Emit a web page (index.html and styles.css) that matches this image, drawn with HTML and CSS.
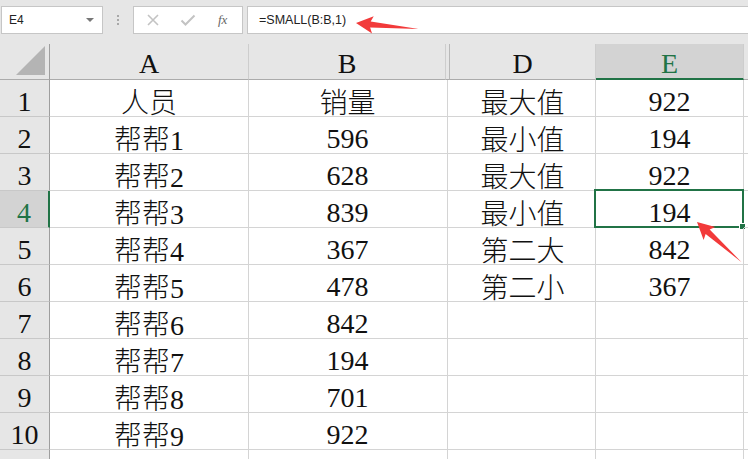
FILE: index.html
```html
<!DOCTYPE html>
<html>
<head>
<meta charset="utf-8">
<link rel="stylesheet" href="styles.css">
</head>
<body>
<div class="app">
  <div class="toolbar">
    <div class="namebox"><span>E4</span><span class="caret"></span></div>
    <div class="dots"><i></i><i></i><i></i></div>
    <div class="fxbtns">
      <svg class="ico" width="14" height="14" viewBox="0 0 14 14"><path d="M2 2L12 12M12 2L2 12" stroke="#c3c3c3" stroke-width="1.6" fill="none"/></svg>
      <svg class="ico" width="16" height="14" viewBox="0 0 16 14"><path d="M1.5 7.5L5.5 11.5L14.5 2.5" stroke="#c3c3c3" stroke-width="2" fill="none"/></svg>
      <span class="fx">fx</span>
    </div>
    <div class="formula">=SMALL(B:B,1)</div>
  </div>
  <div class="grid">
    <div class="hd corner"><svg width="30" height="30" viewBox="0 0 30 30"><polygon points="29,0 29,29 0,29" fill="#b4b4b4"/></svg></div>
    <div class="hd col">A</div>
    <div class="hd col">B</div>
    <div class="hd col hidden"></div>
    <div class="hd col">D</div>
    <div class="hd col sel">E</div>
    <div class="hd col last"></div>

    <div class="rh">1</div><div class="c"><span class="zh">人员</span></div><div class="c nb"><span class="zh">销量</span></div><div class="hc"></div><div class="c"><span class="zh">最大值</span></div><div class="c">922</div><div class="c last"></div>
    <div class="rh">2</div><div class="c"><span class="zh">帮帮</span>1</div><div class="c nb">596</div><div class="hc"></div><div class="c"><span class="zh">最小值</span></div><div class="c">194</div><div class="c last"></div>
    <div class="rh">3</div><div class="c"><span class="zh">帮帮</span>2</div><div class="c nb">628</div><div class="hc"></div><div class="c"><span class="zh">最大值</span></div><div class="c">922</div><div class="c last"></div>
    <div class="rh sel">4</div><div class="c"><span class="zh">帮帮</span>3</div><div class="c nb">839</div><div class="hc"></div><div class="c"><span class="zh">最小值</span></div><div class="c active">194<span class="selbox"><span class="handle"></span></span></div><div class="c last"></div>
    <div class="rh">5</div><div class="c"><span class="zh">帮帮</span>4</div><div class="c nb">367</div><div class="hc"></div><div class="c"><span class="zh">第二大</span></div><div class="c">842</div><div class="c last"></div>
    <div class="rh">6</div><div class="c"><span class="zh">帮帮</span>5</div><div class="c nb">478</div><div class="hc"></div><div class="c"><span class="zh">第二小</span></div><div class="c">367</div><div class="c last"></div>
    <div class="rh">7</div><div class="c"><span class="zh">帮帮</span>6</div><div class="c nb">842</div><div class="hc"></div><div class="c"></div><div class="c"></div><div class="c last"></div>
    <div class="rh">8</div><div class="c"><span class="zh">帮帮</span>7</div><div class="c nb">194</div><div class="hc"></div><div class="c"></div><div class="c"></div><div class="c last"></div>
    <div class="rh">9</div><div class="c"><span class="zh">帮帮</span>8</div><div class="c nb">701</div><div class="hc"></div><div class="c"></div><div class="c"></div><div class="c last"></div>
    <div class="rh">10</div><div class="c"><span class="zh">帮帮</span>9</div><div class="c nb">922</div><div class="hc"></div><div class="c"></div><div class="c"></div><div class="c last"></div>
    <div class="rh"></div><div class="c"></div><div class="c nb"></div><div class="hc"></div><div class="c"></div><div class="c"></div><div class="c last"></div>
  </div>
  <svg class="arrows" width="748" height="459" viewBox="0 0 748 459">
    <polygon transform="translate(356,23) rotate(5.5)" points="0,0 17,-8.5 14.5,-2.8 63,0 14.5,3.2 17,9" fill="#f23a3a"/>
    <polygon transform="translate(697,222) rotate(42)" points="0,0 17,-8.5 14.5,-2.8 60,0 14.5,3.2 17,9" fill="#f23a3a"/>
  </svg>
</div>
</body>
</html>
```
FILE: styles.css
```css
html, body {
  margin: 0;
  padding: 0;
  background: #e6e6e6;
  overflow: hidden;
}
.app {
  position: relative;
  width: 748px;
  height: 459px;
  overflow: hidden;
  font-family: "Liberation Serif", "Noto Sans CJK SC", serif;
}
.toolbar {
  height: 44px;
  display: flex;
  align-items: flex-start;
  padding-top: 6px;
  box-sizing: border-box;
  font-family: "Liberation Sans", "Noto Sans CJK SC", sans-serif;
  font-size: 12px;
  color: #222;
}
.namebox {
  margin-left: 1px;
  width: 102px;
  height: 28px;
  box-sizing: border-box;
  background: #fff;
  border: 1px solid #c6c6c6;
  display: flex;
  align-items: center;
  justify-content: space-between;
  padding: 0 8px 0 7px;
}
.caret {
  width: 0;
  height: 0;
  border-left: 4px solid transparent;
  border-right: 4px solid transparent;
  border-top: 4px solid #777;
}
.dots {
  width: 30px;
  height: 28px;
  display: flex;
  flex-direction: column;
  align-items: center;
  justify-content: center;
  gap: 2px;
}
.dots i {
  display: block;
  width: 2px;
  height: 2px;
  background: #a8a8a8;
}
.fxbtns {
  width: 110px;
  height: 28px;
  box-sizing: border-box;
  background: #fff;
  border: 1px solid #c6c6c6;
  display: flex;
  align-items: center;
  padding-left: 12px;
  gap: 20px;
}
.fx {
  font-family: "Liberation Serif", serif;
  font-style: italic;
  font-size: 13px;
  color: #666;
  margin-left: 2px;
}
.formula {
  margin-left: 4px;
  flex: 1;
  height: 28px;
  box-sizing: border-box;
  background: #fff;
  border: 1px solid #c6c6c6;
  border-right: none;
  padding-left: 11px;
  line-height: 26px;
  font-size: 12.5px;
}
.grid {
  display: grid;
  grid-template-columns: 50px 199px 197px 4px 146px 148px 20px;
  grid-template-rows: 36px repeat(11, 37px);
  background: #fff;
}
.grid > div {
  box-sizing: border-box;
  overflow: visible;
}
.hd {
  background: #e6e6e6;
  border-bottom: 1px solid #ababab;
  border-right: 1px solid #cdcdcd;
  font-size: 28px;
  line-height: 39px;
  text-align: center;
  color: #111;
}
.corner {
  border-right: 1px solid #9e9e9e;
  display: flex;
  align-items: flex-end;
  justify-content: flex-end;
  padding: 0 3px 3px 0;
}
.corner svg { display: block; }
.hd.hidden { border-right: 1px solid #b8b8b8; }
.hd.sel {
  background: #d3d3d3;
  color: #217346;
  border-bottom: 2px solid #217346;
}
.hd.last { border-right: none; }
.rh {
  background: #e6e6e6;
  border-right: 1px solid #9e9e9e;
  border-bottom: 1px solid #c8c8c8;
  font-size: 28px;
  line-height: 43px;
  text-align: center;
  color: #111;
}
.rh.sel {
  background: #d3d3d3;
  color: #217346;
  border-right: 2px solid #217346;
}
.c {
  position: relative;
  border-right: 1px solid #d4d4d4;
  border-bottom: 1px solid #d4d4d4;
  font-size: 28px;
  line-height: 43px;
  text-align: center;
  color: #111;
  white-space: nowrap;
}
.zh {
  font-family: "Noto Sans CJK SC", sans-serif;
  font-weight: 300;
}
.c.nb { border-right: none; }
.hc {
  border-bottom: 1px solid #d4d4d4;
  background: linear-gradient(to right, transparent 1px, #d4d4d4 1px, #d4d4d4 2px, transparent 2px);
}
.c.last { border-right: none; }
.selbox {
  position: absolute;
  left: -2px;
  top: -2px;
  right: -1px;
  bottom: -1px;
  border: 2px solid #217346;
}
.handle {
  position: absolute;
  right: -4px;
  bottom: -4px;
  width: 5px;
  height: 5px;
  background: #217346;
  border: 1px solid #fff;
}
.arrows {
  position: absolute;
  left: 0;
  top: 0;
  pointer-events: none;
}
```
